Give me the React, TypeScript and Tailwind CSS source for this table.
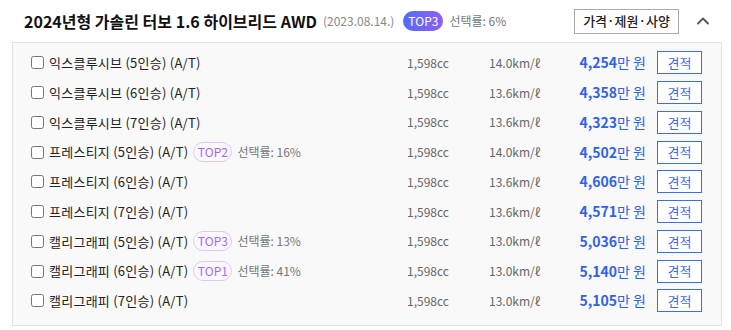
import { ChevronUp } from "lucide-react";

const rows = [
  { name: "익스클루시브 (5인승) (A/T)", km: "14.0km/ℓ", price: "4,254" },
  { name: "익스클루시브 (6인승) (A/T)", km: "13.6km/ℓ", price: "4,358" },
  { name: "익스클루시브 (7인승) (A/T)", km: "13.6km/ℓ", price: "4,323" },
  { name: "프레스티지 (5인승) (A/T)", km: "14.0km/ℓ", price: "4,502", top: "TOP2", rate: "16%" },
  { name: "프레스티지 (6인승) (A/T)", km: "13.6km/ℓ", price: "4,606" },
  { name: "프레스티지 (7인승) (A/T)", km: "13.6km/ℓ", price: "4,571" },
  { name: "캘리그래피 (5인승) (A/T)", km: "13.0km/ℓ", price: "5,036", top: "TOP3", rate: "13%" },
  { name: "캘리그래피 (6인승) (A/T)", km: "13.0km/ℓ", price: "5,140", top: "TOP1", rate: "41%" },
  { name: "캘리그래피 (7인승) (A/T)", km: "13.0km/ℓ", price: "5,105" },
];

const font = "font-['Noto_Sans_CJK_KR','Noto_Sans',sans-serif]";

export default function App() {
  return (
    <div className={`h-[330px] w-[731px] overflow-hidden bg-white ${font}`}>
      <div className="flex h-[42px] items-center pl-[24px] pr-[18px]">
        <span className="text-[16px] font-bold text-[#111]">
          2024년형 가솔린 터보 1.6 하이브리드 AWD
        </span>
        <span className="ml-[6px] text-[12px] text-[#888]">(2023.08.14.)</span>
        <span className="ml-[9px] flex h-[20px] w-[40px] items-center justify-center rounded-full bg-gradient-to-r from-[#4f6ef7] to-[#8d5cf6] text-[12px] text-white">
          TOP3
        </span>
        <span className="ml-[6px] text-[12px] text-[#777]">선택률: 6%</span>
        <button className="ml-auto flex h-[25px] w-[105px] items-center justify-center border border-[#aaa] bg-white text-[13px] font-medium text-[#222]">
          가격·제원·사양
        </button>
        <ChevronUp className="ml-[14px] size-[20px] text-[#555]" strokeWidth={2.2} />
      </div>
      <div className="ml-[12px] w-[710px] border border-[#e3e3e3] bg-[#f9f9f9] pb-[9px] pt-[5px]">
        {rows.map((r) => (
          <div key={r.name} className="flex h-[29.75px] items-center pl-[18px] pr-[19px]">
            <div className="flex w-[376px] items-center">
              <input type="checkbox" className="m-0 size-[13px]" />
              <span className="ml-[5px] text-[13px] tracking-[0.25px] text-[#222]">{r.name}</span>
              {r.top && (
                <>
                  <span className="ml-[5px] flex h-[20px] w-[39px] items-center justify-center rounded-full border border-[#dcc9fb] bg-[#fbf8ff] text-[12px] text-[#a16bf2]">
                    {r.top}
                  </span>
                  <span className="ml-[5px] text-[12px] text-[#777]">선택률: {r.rate}</span>
                </>
              )}
            </div>
            <span className="w-[82px] text-[12px] text-[#666]">1,598cc</span>
            <span className="flex-1 text-[12px] text-[#666]">{r.km}</span>
            <span className="text-[14px] text-[#2f62e6]">
              <span className="font-bold">{r.price}</span>만 원
            </span>
            <button className="ml-[11px] flex h-[23px] w-[45px] items-center justify-center border border-[#3a6de6] bg-white text-[13px] text-[#3a6de6]">
              견적
            </button>
          </div>
        ))}
      </div>
    </div>
  );
}
